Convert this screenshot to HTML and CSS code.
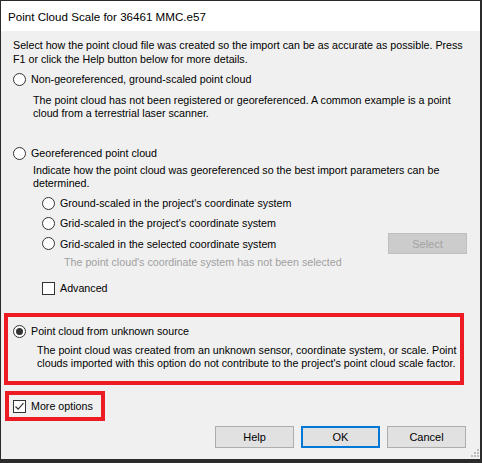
FILE: index.html
```html
<!DOCTYPE html>
<html lang="en">
  <head>
    <meta charset="UTF-8" />
    <title>Point Cloud Scale</title>
    <link rel="stylesheet" href="styles.css">
  </head>
  <body>
    <div class="dialog">
      <div class="titlebar">Point Cloud Scale for 36461 MMC.e57</div>

      <p class="intro">
        Select how the point cloud file was created so the import can be as accurate as possible. Press<br />
        F1 or click the Help button below for more details.
      </p>

      <!-- Non-georeferenced -->
      <label class="option opt-first">
        <span class="radio"></span>
        Non-georeferenced, ground-scaled point cloud
      </label>
      <p class="desc desc-first">
        The point cloud has not been registered or georeferenced. A common example is a point<br />
        cloud from a terrestrial laser scanner.
      </p>

      <!-- Georeferenced -->
      <label class="option opt-geo">
        <span class="radio"></span>
        Georeferenced point cloud
      </label>
      <p class="desc desc-geo">
        Indicate how the point cloud was georeferenced so the best import parameters can be<br />
        determined.
      </p>

      <div class="sub-list">
        <label class="option sub">
          <span class="radio"></span>
          Ground-scaled in the project's coordinate system
        </label>
        <label class="option sub">
          <span class="radio"></span>
          Grid-scaled in the project's coordinate system
        </label>
        <div class="sub-select">
          <label class="option sub">
            <span class="radio"></span>
            Grid-scaled in the selected coordinate system
          </label>
          <button class="btn btn-disabled" disabled>Select</button>
        </div>
      </div>
      <p class="note">The point cloud's coordinate system has not been selected</p>

      <label class="option sub advanced">
        <span class="check"></span>
        Advanced
      </label>

      <!-- Opção destacada -->
      <div class="highlight hl-unknown">
        <label class="option">
          <span class="radio checked"></span>
          Point cloud from unknown source
        </label>
        <p class="desc desc-unknown">
          The point cloud was created from an unknown sensor, coordinate system, or scale. Point<br />
          clouds imported with this option do not contribute to the project's point cloud scale factor.
        </p>
      </div>

      <div class="highlight hl-more">
        <label class="option">
          <span class="check">
            <svg viewBox="0 0 11 11" aria-hidden="true">
              <path d="M1.5 5.5 L4.2 8.2 L9.5 2.2" />
            </svg>
          </span>
          More options
        </label>
      </div>

      <div class="buttons">
        <button class="btn">Help</button>
        <button class="btn btn-default">OK</button>
        <button class="btn">Cancel</button>
      </div>

      <!-- Grip de redimensionar -->
      <svg class="grip" viewBox="0 0 8 8" aria-hidden="true">
        <rect x="6" y="0" width="2" height="2" />
        <rect x="3" y="3" width="2" height="2" />
        <rect x="6" y="3" width="2" height="2" />
        <rect x="0" y="6" width="2" height="2" />
        <rect x="3" y="6" width="2" height="2" />
        <rect x="6" y="6" width="2" height="2" />
      </svg>
    </div>
  </body>
</html>
```

FILE: styles.css
```css
body {
  margin: 0;
  padding: 0;
  background-color: #2b2b2b;
  font-family: "Liberation Sans", Arial, sans-serif;
  font-size: 10.7px;
  color: #000;
  overflow: hidden;
}
p {
  margin: 0;
}
.dialog {
  position: relative;
  margin: 1px 2px 0 1px;
  height: 458px;
  background-color: #f0f0f0;
  display: flex;
  flex-direction: column;
  align-items: flex-start;
}
.titlebar {
  align-self: stretch;
  height: 30px;
  background-color: #fff;
  padding-left: 7px;
  font-size: 11.6px;
  display: flex;
  align-items: center;
}
.intro {
  margin: 7px 0 0 12px;
  line-height: 14px;
  white-space: nowrap;
}
/* Linhas de opção */
.option {
  display: flex;
  align-items: center;
  gap: 5px;
  height: 16px;
  margin-left: 12px;
  white-space: nowrap;
}
.radio {
  width: 11px;
  height: 11px;
  border: 1px solid #333;
  border-radius: 50%;
  background-color: #fff;
  display: flex;
  align-items: center;
  justify-content: center;
}
.radio.checked::after {
  content: "";
  width: 7px;
  height: 7px;
  border-radius: 50%;
  background-color: #333;
}
.check {
  width: 11px;
  height: 11px;
  border: 1px solid #333;
  background-color: #fff;
  display: flex;
}
.check svg {
  width: 11px;
  height: 11px;
  fill: none;
  stroke: #333;
  stroke-width: 1.2;
}
.desc {
  margin-left: 32px;
  line-height: 13px;
  white-space: nowrap;
}
.opt-first {
  margin-top: 5px;
}
.desc-first {
  margin-top: 7px;
}
.opt-geo {
  margin-top: 25px;
}
.desc-geo {
  margin-top: 3px;
}
.sub-list {
  align-self: stretch;
  margin-top: 5px;
  display: flex;
  flex-direction: column;
  gap: 4px;
}
.option.sub {
  margin-left: 41px;
}
.sub-select {
  margin-top: -2px;
  display: flex;
  align-items: center;
  justify-content: space-between;
  padding-right: 13px;
}
.note {
  margin: 2px 0 0 63px;
  line-height: 13px;
  color: #a0a0a0;
}
.advanced {
  margin-top: 11px;
}
/* Caixas vermelhas */
.highlight {
  border: 4px solid #ed1c24;
}
.hl-unknown {
  margin: 17px 0 0 3px;
  width: 451px;
  padding: 6px 0 11px 1px;
}
.hl-unknown .option {
  margin-left: 4px;
}
.desc-unknown {
  margin: 5px 0 0 28px;
}
.hl-more {
  margin: 6px 0 0 4px;
  width: 92px;
  padding: 3px 0 3px 0;
}
.hl-more .option {
  margin-left: 4px;
}
/* Botões */
.buttons {
  align-self: stretch;
  margin-top: 5px;
  padding-right: 14px;
  display: flex;
  justify-content: flex-end;
  gap: 7px;
}
.btn {
  width: 79px;
  height: 22px;
  padding: 0;
  font-family: inherit;
  font-size: 11px;
  color: #000;
  background-color: #e1e1e1;
  border: 1px solid #adadad;
}
.btn-default {
  border-color: #0078d7;
  box-shadow: inset 0 0 0 1px #0078d7;
}
.btn-disabled {
  height: 21px;
  background-color: #cccccc;
  border-color: #bfbfbf;
  color: #a3a3a3;
}
.grip {
  position: absolute;
  right: 1px;
  bottom: 2px;
  width: 8px;
  height: 8px;
  fill: #bcbcbc;
}
```
